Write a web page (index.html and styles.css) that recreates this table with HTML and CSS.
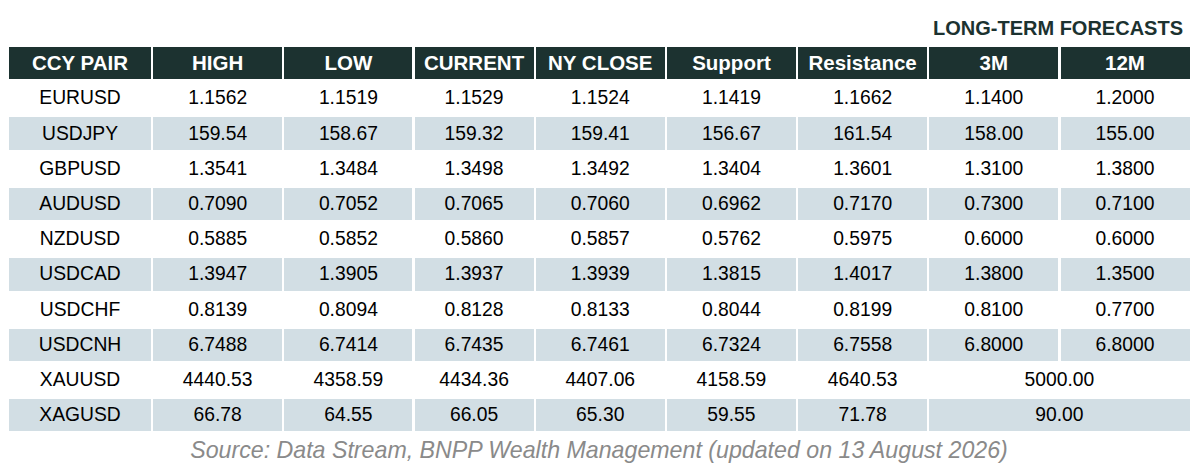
FILE: index.html
```html
<!DOCTYPE html>
<html lang="en">
<head>
<meta charset="utf-8">
<title>Long-term forecasts</title>
<link rel="stylesheet" href="styles.css">
</head>
<body>
<div class="page">
  <div class="title">LONG-TERM FORECASTS</div>
  <div class="grid">
    <div class="row head">
      <div>CCY PAIR</div><div>HIGH</div><div>LOW</div><div>CURRENT</div><div>NY CLOSE</div><div>Support</div><div>Resistance</div><div>3M</div><div>12M</div>
    </div>
    <div class="row">
      <div>EURUSD</div><div>1.1562</div><div>1.1519</div><div>1.1529</div><div>1.1524</div><div>1.1419</div><div>1.1662</div><div>1.1400</div><div>1.2000</div>
    </div>
    <div class="row alt">
      <div>USDJPY</div><div>159.54</div><div>158.67</div><div>159.32</div><div>159.41</div><div>156.67</div><div>161.54</div><div>158.00</div><div>155.00</div>
    </div>
    <div class="row">
      <div>GBPUSD</div><div>1.3541</div><div>1.3484</div><div>1.3498</div><div>1.3492</div><div>1.3404</div><div>1.3601</div><div>1.3100</div><div>1.3800</div>
    </div>
    <div class="row alt">
      <div>AUDUSD</div><div>0.7090</div><div>0.7052</div><div>0.7065</div><div>0.7060</div><div>0.6962</div><div>0.7170</div><div>0.7300</div><div>0.7100</div>
    </div>
    <div class="row">
      <div>NZDUSD</div><div>0.5885</div><div>0.5852</div><div>0.5860</div><div>0.5857</div><div>0.5762</div><div>0.5975</div><div>0.6000</div><div>0.6000</div>
    </div>
    <div class="row alt">
      <div>USDCAD</div><div>1.3947</div><div>1.3905</div><div>1.3937</div><div>1.3939</div><div>1.3815</div><div>1.4017</div><div>1.3800</div><div>1.3500</div>
    </div>
    <div class="row">
      <div>USDCHF</div><div>0.8139</div><div>0.8094</div><div>0.8128</div><div>0.8133</div><div>0.8044</div><div>0.8199</div><div>0.8100</div><div>0.7700</div>
    </div>
    <div class="row alt">
      <div>USDCNH</div><div>6.7488</div><div>6.7414</div><div>6.7435</div><div>6.7461</div><div>6.7324</div><div>6.7558</div><div>6.8000</div><div>6.8000</div>
    </div>
    <div class="row">
      <div>XAUUSD</div><div>4440.53</div><div>4358.59</div><div>4434.36</div><div>4407.06</div><div>4158.59</div><div>4640.53</div><div class="span2">5000.00</div>
    </div>
    <div class="row alt">
      <div>XAGUSD</div><div>66.78</div><div>64.55</div><div>66.05</div><div>65.30</div><div>59.55</div><div>71.78</div><div class="span2">90.00</div>
    </div>
  </div>
  <div class="source">Source: Data Stream, BNPP Wealth Management (updated on 13 August 2026)</div>
</div>
</body>
</html>
```

FILE: styles.css
```css
html, body {
  margin: 0;
  padding: 0;
  background: #ffffff;
}

.page {
  width: 1200px;
  height: 470px;
  box-sizing: border-box;
  padding: 17px 0 0 9px;
  font-family: "Liberation Sans", Arial, sans-serif;
  overflow: hidden;
}

.title {
  width: 1174px;
  text-align: right;
  font-size: 20px;
  line-height: 23px;
  font-weight: bold;
  color: #1c3230;
  margin-bottom: 7px;
}

.grid {
  display: grid;
  width: 1180px;
  grid-template-columns: 142px 129px 128px 119px 129px 129px 129px 129px 129px;
  grid-auto-rows: 32.4px;
  column-gap: 2.2px;
  row-gap: 2.8px;
}

.row {
  display: contents;
}

.row > div {
  display: flex;
  align-items: center;
  justify-content: center;
  font-size: 19.3px;
  color: #000000;
  white-space: nowrap;
}

.row.alt > div {
  background: #d2dee4;
}

.row.head > div {
  background: #1c3230;
  color: #ffffff;
  font-weight: bold;
  font-size: 20.5px;
}

.row > .span2 {
  grid-column: span 2;
}

.source {
  width: 1180px;
  margin-top: 6px;
  text-align: center;
  font-style: italic;
  font-size: 23.2px;
  line-height: 26px;
  color: #8a8a8a;
}
```
